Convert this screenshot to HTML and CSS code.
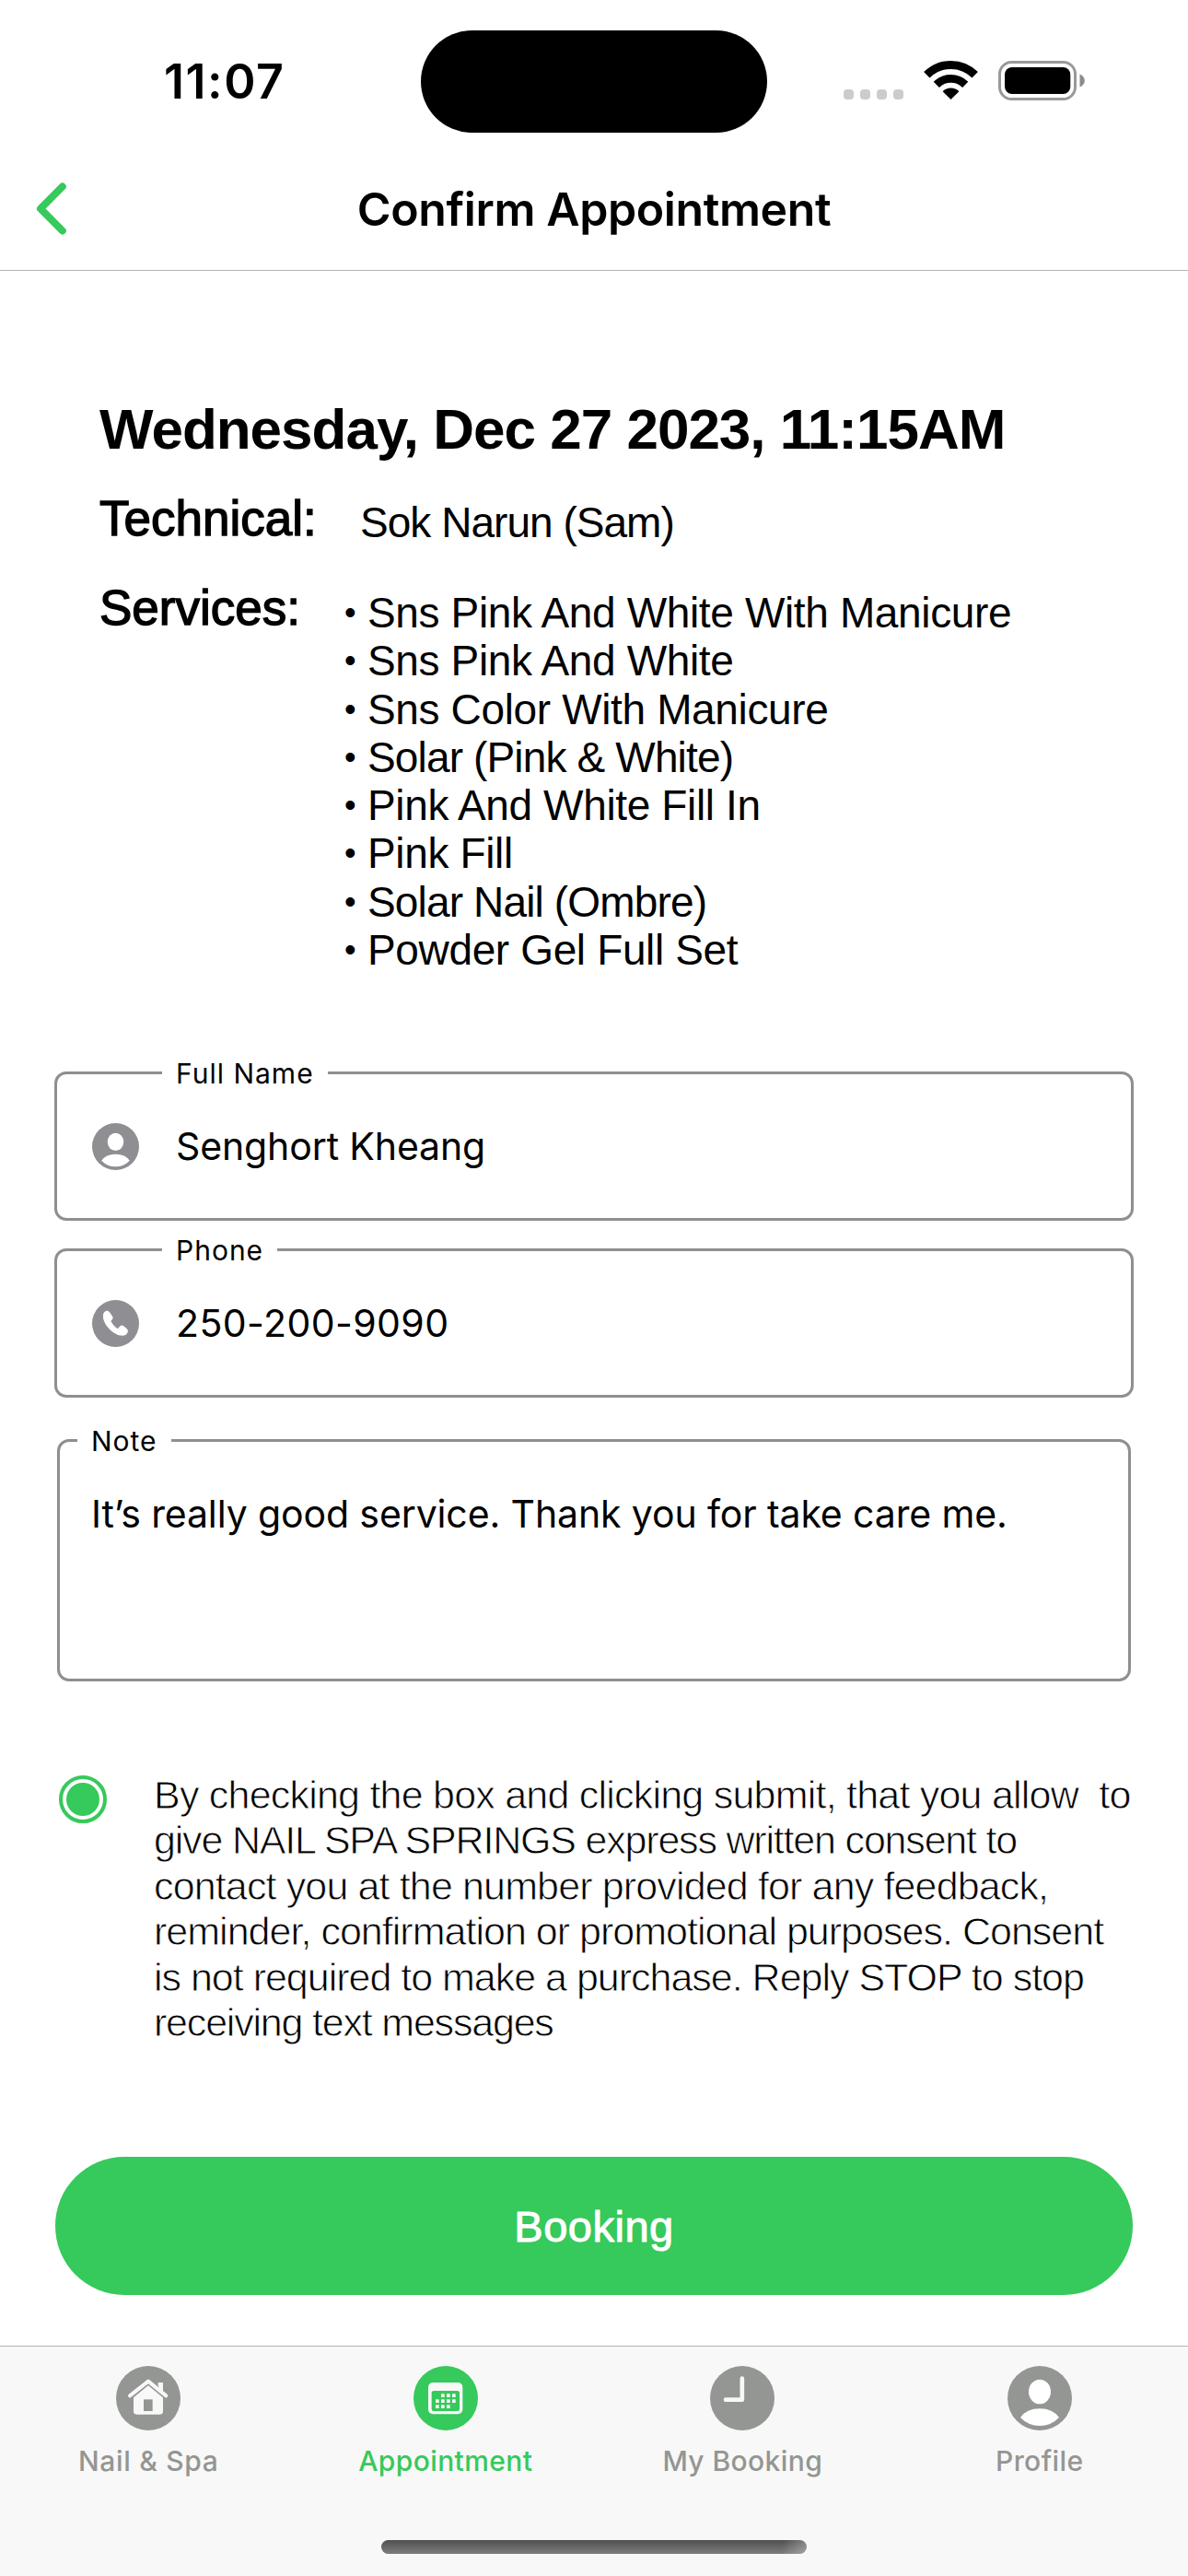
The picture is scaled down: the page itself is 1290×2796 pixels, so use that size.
FILE: index.html
```
<!DOCTYPE html>
<html lang="en">
<head>
<meta charset="utf-8">
<title>Confirm Appointment</title>
<link rel="stylesheet" href="styles.css">
</head>
<body>
<div class="status-bar">
  <span class="status-time">11:07</span>
  <div class="island"></div>
  <svg class="status-icons" viewBox="916 60 264 52" aria-hidden="true">
    <g fill="#ccc">
      <rect x="916" y="96" width="11" height="11" rx="4"/>
      <rect x="934" y="96" width="11" height="11" rx="4"/>
      <rect x="952" y="96" width="11" height="11" rx="4"/>
      <rect x="970" y="96" width="11" height="11" rx="4"/>
    </g>
    <g fill="none" stroke="#000">
      <path stroke-width="9" d="M1006.3 80.3A37 37 0 0 1 1058.7 80.3"/>
      <path stroke-width="8.7" d="M1016.8 90.8A22.2 22.2 0 0 1 1048.2 90.8"/>
    </g>
    <path d="M1032.5 107L1023.6 98.2A12.6 12.6 0 0 1 1041.4 98.2Z"/>
    <rect x="1085.5" y="66.5" width="82" height="40" rx="13" fill="none" stroke="#999" stroke-width="3"/>
    <rect x="1091" y="72" width="71.300" height="29" rx="8"/>
    <path d="M1172.500 79.500C1179.500 82 1179.500 91 1172.500 93.500Z" fill="#8c8c8c"/>
  </svg>
</div>
<header class="nav-bar">
  <svg class="back" viewBox="0 0 33 57" aria-label="Back"><path d="M28.800 4.500L5 28.500L28.800 52.500" fill="none" stroke="#36c95b" stroke-width="8" stroke-linecap="round" stroke-linejoin="round"/></svg>
  <h1 class="nav-title">Confirm Appointment</h1>
</header>
<main class="content">
  <section class="summary">
    <h2 class="date">Wednesday, Dec 27 2023, 11:15AM</h2>
    <div class="row technical">
      <span class="label">Technical:</span>
      <span class="value">Sok Narun (Sam)</span>
    </div>
    <div class="row services">
      <span class="label">Services:</span>
      <ul class="list">
        <li><span class="bullet">•</span>Sns Pink And White With Manicure</li>
        <li><span class="bullet">•</span>Sns Pink And White</li>
        <li><span class="bullet">•</span>Sns Color With Manicure</li>
        <li class="tight"><span class="bullet">•</span>Solar (Pink &amp; White)</li>
        <li><span class="bullet">•</span>Pink And White Fill In</li>
        <li><span class="bullet">•</span>Pink Fill</li>
        <li class="tight"><span class="bullet">•</span>Solar Nail (Ombre)</li>
        <li><span class="bullet">•</span>Powder Gel Full Set</li>
      </ul>
    </div>
  </section>
  <section class="form">
    <div class="field">
      <span class="field-label">Full Name</span>
      <svg class="field-icon" viewBox="0 0 210 210" aria-hidden="true">
        <circle cx="105" cy="105" r="105" fill="#8e8e93"/>
        <ellipse cx="105" cy="84" rx="36" ry="40" fill="#fff"/>
        <path d="M42 168Q62 139 105 139Q148 139 168 168Q142 195 105 195Q68 195 42 168Z" fill="#fff"/>
      </svg>
      <span class="field-value">Senghort Kheang</span>
    </div>
    <div class="field">
      <span class="field-label">Phone</span>
      <svg class="field-icon" viewBox="0 0 51 51" aria-hidden="true">
        <circle cx="25.500" cy="25.500" r="25.500" fill="#8e8e93"/>
        <path d="M12 17C12 13 14.500 11.500 17 11.700C19 12.500 21 16 22.500 18.500C23.300 20.500 20.500 22 20.500 23C21.500 25.500 25 29.500 27.500 31C29 31.200 30 27.500 32.500 27.600C34.500 28.300 38 31 38.800 33C39.300 36 36.500 38.600 33.500 38.700C24 39.500 11 26 12 17Z" fill="#fff"/>
      </svg>
      <span class="field-value phone">250-200-9090</span>
    </div>
    <div class="field note">
      <span class="field-label">Note</span>
      <span class="field-value">It’s really good service. Thank you for take care me.</span>
    </div>
  </section>
  <div class="consent">
    <span class="radio"><span class="radio-dot"></span></span>
    <p class="consent-text">
      <span class="l1">By checking the box and clicking submit, that you allow&nbsp; to</span>
      <span class="l2">give NAIL SPA SPRINGS express written consent to</span>
      <span class="l3">contact you at the number provided for any feedback,</span>
      <span class="l4">reminder, confirmation or promotional purposes. Consent</span>
      <span class="l5">is not required to make a purchase. Reply STOP to stop</span>
      <span class="l6">receiving text messages</span>
    </p>
  </div>
  <button class="booking">Booking</button>
</main>
<nav class="tab-bar">
  <div class="tabs">
    <div class="tab nail">
      <svg class="tab-icon" viewBox="0 0 210 210" aria-hidden="true">
        <circle cx="105" cy="105" r="105" fill="#939692"/>
        <g fill="#f8f8f8">
          <path d="M137 54H153V88L137 75Z"/>
          <path d="M105 63L153 103V148Q153 158 143 158H67Q57 158 57 148V103Z"/>
        </g>
        <path d="M45 97L105 50L163 97" fill="none" stroke="#939692" stroke-width="20"/>
        <path d="M139 54H153V84L139 72Z" fill="#f8f8f8"/>
        <path d="M45 97L105 50L163 97" fill="none" stroke="#f8f8f8" stroke-width="12" stroke-linecap="round" stroke-linejoin="round"/>
        <path d="M90 109H119V147H90Z" fill="#939692"/>
      </svg>
      <span>Nail &amp; Spa</span>
    </div>
    <div class="tab active">
      <svg class="tab-icon" viewBox="0 0 210 210" aria-hidden="true">
        <circle cx="105" cy="105" r="105" fill="#36c95b"/>
        <rect x="48" y="54" width="112" height="103" rx="15" fill="#f8f8f8"/>
        <rect x="59" y="81" width="91" height="66" rx="7" fill="#36c95b"/>
        <path fill="#f8f8f8" d="M90 91h11v11h-11zM108 91h11v11h-11zM126 91h11v11h-11zM72 109h11v11h-11zM90 109h11v11h-11zM108 109h11v11h-11zM126 109h11v11h-11zM72 127h11v11h-11zM90 127h11v11h-11zM108 127h11v11h-11z"/>
      </svg>
      <span>Appointment</span>
    </div>
    <div class="tab">
      <svg class="tab-icon" viewBox="0 0 210 210" aria-hidden="true">
        <circle cx="105" cy="105" r="105" fill="#939692"/>
        <path d="M104.500 41V110H51" fill="none" stroke="#f8f8f8" stroke-width="14" stroke-linecap="round" stroke-linejoin="round"/>
      </svg>
      <span>My Booking</span>
    </div>
    <div class="tab">
      <svg class="tab-icon" viewBox="0 0 210 210" aria-hidden="true">
        <circle cx="105" cy="105" r="105" fill="#939692"/>
        <ellipse cx="105" cy="84" rx="36" ry="40" fill="#fff"/>
        <path d="M42 168Q62 139 105 139Q148 139 168 168Q142 195 105 195Q68 195 42 168Z" fill="#fff"/>
      </svg>
      <span>Profile</span>
    </div>
  </div>
  <div class="home-indicator"></div>
</nav>
</body>
</html>
```
FILE: styles.css
```
* { box-sizing: border-box; }

body {
  margin: 0;
  width: 1290px;
  height: 2796px;
  display: flex;
  flex-direction: column;
  background: #fff;
  color: #000;
  font-family: "Liberation Sans", Arial, sans-serif;
}

h1, h2, p, ul { margin: 0; padding: 0; }

/* Status bar */
.status-bar {
  height: 177px;
  display: grid;
  grid-template-columns: 457px 376px 457px;
  align-items: center;
}
.status-time {
  padding-left: 178px;
  font: 600 52px/60px Inter, sans-serif;
  letter-spacing: 1.54px;
}
.island {
  height: 111px;
  border-radius: 56px;
  background: #000;
}
.status-icons {
  width: 264px;
  height: 52px;
  margin: 0 0 4px 83px;
}

/* Navigation bar */
.nav-bar {
  height: 117px;
  display: grid;
  grid-template-columns: 200px 1fr 200px;
  align-items: start;
  border-bottom: 1px solid #b3b3b3;
}
.back {
  width: 33px;
  height: 57px;
  margin: 21px 0 0 39px;
}
.nav-title {
  text-align: center;
  font: 600 50px/100px Inter, sans-serif;
  letter-spacing: -0.4px;
}

.content { padding: 137px 59px 0; }

/* Appointment summary */
.summary { padding-left: 49px; }
.date {
  font-size: 62px;
  line-height: 70px;
  letter-spacing: -1px;
  white-space: nowrap;
}
.row { display: flex; }
.technical { margin-top: 32px; height: 64px; }
.services { margin-top: 33px; height: 426px; }
.label {
  font-size: 53px;
  line-height: 60px;
  letter-spacing: 0;
  -webkit-text-stroke: 1.4px #000;
}
.technical .label { width: 283px; }
.services .label { width: 264px; }
.value {
  padding-top: 4px;
  font-size: 46px;
  line-height: 60px;
  letter-spacing: -0.97px;
}
.list {
  padding-top: 9px;
  list-style: none;
  font-size: 46px;
  line-height: 52.25px;
  letter-spacing: -0.36px;
}
.list li { display: flex; white-space: nowrap; }
.list .tight { letter-spacing: -0.85px; }
.bullet { width: 27px; padding-left: 2px; font-size: 36px; }

/* Form fields */
.form { padding-top: 107px; }
.field {
  position: relative;
  height: 162px;
  display: flex;
  align-items: center;
  gap: 40px;
  padding-left: 38px;
  border: 3px solid #8e8e93;
  border-radius: 13px;
}
.field + .field { margin-top: 30px; }
.field-label {
  position: absolute;
  top: -19px;
  left: 114px;
  padding: 0 15px;
  background: #fff;
  font: 400 30px/36px Inter, sans-serif;
  letter-spacing: 1px;
}
.field-icon { width: 51px; height: 51px; }
.field-value {
  font: 400 41px/50px Inter, sans-serif;
  letter-spacing: -0.12px;
}
.field-value.phone { letter-spacing: 0.42px; }
.field + .field.note {
  height: 263px;
  margin: 45px 3px 0;
  align-items: flex-start;
  padding: 53px 34px 0;
}
.note .field-label { left: 19px; }

/* Consent */
.consent {
  height: 296px;
  margin-top: 98px;
  padding-left: 5px;
  display: flex;
  gap: 51px;
}
.radio {
  width: 52px;
  height: 52px;
  margin-top: 4px;
  display: flex;
  align-items: center;
  justify-content: center;
  border: 4.500px solid #36c95b;
  border-radius: 50%;
}
.radio-dot {
  width: 36px;
  height: 36px;
  border-radius: 50%;
  background: #36c95b;
}
.consent-text {
  padding-top: 1px;
  font-size: 43px;
  line-height: 49.4px;
  -webkit-text-stroke: 0.8px #fff;
}
.consent-text span { display: block; white-space: nowrap; }
.l1 { letter-spacing: -0.78px; }
.l2 { letter-spacing: -1.19px; }
.l3 { letter-spacing: -0.86px; }
.l4 { letter-spacing: -0.98px; }
.l5 { letter-spacing: -1.01px; }
.l6 { letter-spacing: -1.2px; }

.booking {
  width: 1170px;
  height: 150px;
  margin: 122px 1px 0;
  padding: 2px 0 0;
  border: 0;
  border-radius: 75px;
  background: #36c95b;
  color: #fff;
  font: 400 47px/60px "Liberation Sans", Arial, sans-serif;
  letter-spacing: 0.5px;
  -webkit-text-stroke: 1px #fff;
}

/* Tab bar */
.tab-bar {
  height: 250px;
  margin-top: auto;
  display: flex;
  flex-direction: column;
  align-items: center;
  border-top: 1px solid #b0b2b0;
  background: #f8f8f8;
}
.tabs {
  width: 100%;
  height: 210px;
  padding-top: 21px;
  display: grid;
  grid-template-columns: repeat(4, 1fr);
}
.tab {
  display: flex;
  flex-direction: column;
  align-items: center;
  gap: 15px;
  color: #939692;
  font: 500 30px/36px Inter, sans-serif;
  letter-spacing: 0.4px;
}
.tab.nail { letter-spacing: 0.7px; }
.tab.active { color: #36c95b; }
.tab-icon { width: 70px; height: 70px; }
.home-indicator {
  width: 462px;
  height: 15px;
  border-radius: 8px;
  background:
    linear-gradient(100deg, transparent 94%, rgba(255, 255, 255, 0.3) 100%),
    linear-gradient(#505050, #7d7d7d);
}
```
